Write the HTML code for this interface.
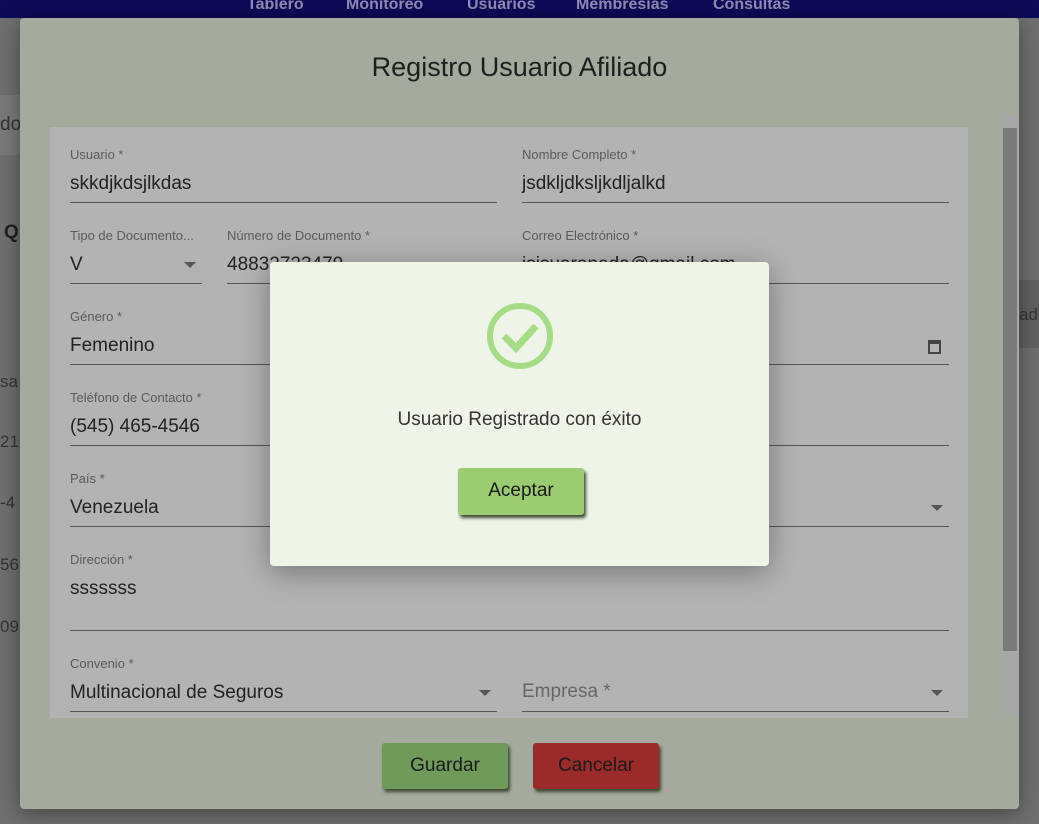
<!DOCTYPE html>
<html><head><meta charset="utf-8"><style>
*{box-sizing:border-box;margin:0;padding:0}
body{width:1039px;height:824px;overflow:hidden;background:#6f6f6f;font-family:"Liberation Sans",Arial,sans-serif;position:relative}
.top{position:absolute;left:0;top:0;width:1039px;height:18px;background:#0f0a57;color:#8f8cb3;font-size:16px;font-weight:bold}
.top span{position:absolute;top:-4px}
.bgstrip{position:absolute;background:#777}
.modal{position:absolute;left:20px;top:18px;width:999px;height:791px;background:#a4aa9e;border-radius:4px;box-shadow:0 4px 20px rgba(0,0,0,.4)}
.title{position:absolute;top:34px;width:100%;text-align:center;font-size:27px;color:#1e1e1e}
.card{position:absolute;left:30px;top:109px;width:918px;height:591px;background:#b3b3b3}
.f{position:absolute;border-bottom:1px solid #555}
.f .l{position:absolute;left:0;font-size:13px;color:#5a5a5a;top:1px}
.f .v{position:absolute;left:0;font-size:19px;color:#222;top:27px;white-space:nowrap}
.arr{position:absolute;right:6px;width:0;height:0;border-left:6px solid transparent;border-right:6px solid transparent;border-top:6px solid #555}
.sb{position:absolute;left:981px;top:97px;width:16px;height:600px;background:#a8a8a8}
.thumb{position:absolute;left:983px;top:110px;width:14px;height:523px;background:#7a7a7a}
.btn{position:absolute;width:126px;height:46px;border-radius:3px;font-size:19px;color:#1a1a1a;text-align:center;line-height:46px;box-shadow:2px 3px 3px #3d4a30}
.dlg{position:absolute;left:270px;top:262px;width:499px;height:304px;background:#eef5e8;border-radius:4px;box-shadow:0 6px 30px rgba(0,0,0,.35)}
</style></head><body>
<div class="top"><span style="left:247px">Tablero</span><span style="left:346px">Monitoreo</span><span style="left:467px">Usuarios</span><span style="left:576px">Membresías</span><span style="left:713px">Consultas</span></div>
<div class="bgstrip" style="left:0;top:95px;width:20px;height:60px;background:#7a7a7a"></div>
<div style="position:absolute;left:0;top:114px;font-size:19px;color:#333">do</div>
<div style="position:absolute;left:4px;top:222px;font-size:19px;color:#222;font-weight:bold">Q</div>
<div style="position:absolute;left:0;top:372px;font-size:17px;color:#333">sa</div>
<div style="position:absolute;left:0;top:432px;font-size:17px;color:#333">21</div>
<div style="position:absolute;left:0;top:493px;font-size:17px;color:#333">-4</div>
<div style="position:absolute;left:0;top:555px;font-size:17px;color:#333">56</div>
<div style="position:absolute;left:0;top:617px;font-size:17px;color:#333">09</div>
<div class="bgstrip" style="left:1019px;top:280px;width:20px;height:68px;background:#606060"></div>
<div style="position:absolute;left:1019px;top:305px;font-size:17px;color:#333">ad</div>
<div class="modal">
<div class="title">Registro Usuario Afiliado</div>
<div class="card">
<div class="f" style="left:20px;top:19px;width:427px;height:57px"><div class="l">Usuario *</div><div class="v">skkdjkdsjlkdas</div></div>
<div class="f" style="left:472px;top:19px;width:427px;height:57px"><div class="l">Nombre Completo *</div><div class="v">jsdkljdksljkdljalkd</div></div>
<div class="f" style="left:20px;top:100px;width:132px;height:57px"><div class="l">Tipo de Documento...</div><div class="v">V</div><div class="arr" style="top:35px"></div></div>
<div class="f" style="left:177px;top:100px;width:270px;height:57px"><div class="l">Número de Documento *</div><div class="v">48832723479</div></div>
<div class="f" style="left:472px;top:100px;width:427px;height:57px"><div class="l">Correo Electrónico *</div><div class="v">jsjsuaraneda@gmail.com</div></div>
<div class="f" style="left:20px;top:181px;width:427px;height:57px"><div class="l">Género *</div><div class="v">Femenino</div></div>
<div class="f" style="left:472px;top:181px;width:427px;height:57px"><div style="position:absolute;right:8px;top:32px;width:13px;height:14px;border:2px solid #444;border-top-width:4px"></div></div>
<div class="f" style="left:20px;top:262px;width:427px;height:57px"><div class="l">Teléfono de Contacto *</div><div class="v">(545) 465-4546</div></div>
<div class="f" style="left:472px;top:262px;width:427px;height:57px"></div>
<div class="f" style="left:20px;top:343px;width:427px;height:57px"><div class="l">País *</div><div class="v">Venezuela</div></div>
<div class="f" style="left:472px;top:343px;width:427px;height:57px"><div class="arr" style="top:35px"></div></div>
<div class="f" style="left:20px;top:424px;width:879px;height:80px"><div class="l">Dirección *</div><div class="v">sssssss</div></div>
<div class="f" style="left:20px;top:528px;width:427px;height:57px"><div class="l">Convenio *</div><div class="v">Multinacional de Seguros</div><div class="arr" style="top:35px"></div></div>
<div class="f" style="left:472px;top:528px;width:427px;height:57px"><div class="v" style="color:#666;top:26px">Empresa *</div><div class="arr" style="top:35px"></div></div>
</div>
<div class="sb"></div><div class="thumb"></div>
<div class="btn" style="left:362px;top:725px;background:#6f9a5a">Guardar</div>
<div class="btn" style="left:513px;top:725px;background:#9b2a2a">Cancelar</div>
</div>
<div class="dlg">
<svg style="position:absolute;left:215px;top:40px" width="70" height="70" viewBox="0 0 70 70"><circle cx="35" cy="34" r="30" fill="none" stroke="#a6dc86" stroke-width="6"/><path d="M19 34 L31 46 L51 24" fill="none" stroke="#a6dc86" stroke-width="7"/></svg>
<div style="position:absolute;top:147px;width:100%;text-align:center;font-size:19px;color:#333">Usuario Registrado con éxito</div>
<div class="btn" style="left:188px;top:206px;height:47px;background:#9ccc72">Aceptar</div>
</div>
</body></html>
